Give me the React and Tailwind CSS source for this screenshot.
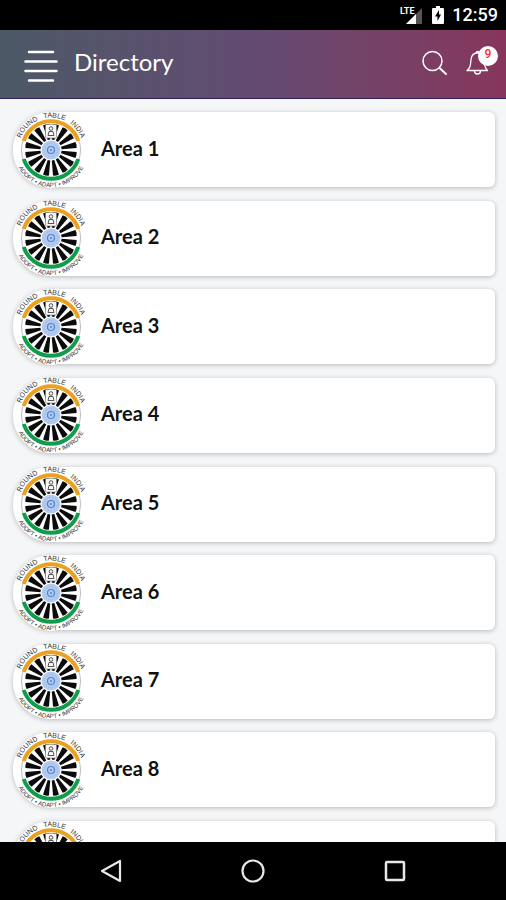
import { useId } from 'react';

const areas = [1, 2, 3, 4, 5, 6, 7, 8, 9];
const spokes = Array.from({ length: 16 }, (_, i) => i * 22.5 + 11.25);

function TableLogo() {
  const id = useId();
  const topArc = `${id}-top`;
  const bottomArc = `${id}-bottom`;

  return (
    <svg className="size-19 shrink-0 overflow-visible" viewBox="-38 -38 76 76" role="img" aria-label="Round Table India">
      <defs>
        <path id={topArc} d="M-31.5 8A32.5 32.5 0 1 1 31.5 8" />
        <path id={bottomArc} d="M-36.5 -6A37 37 0 1 0 36.5 -6" />
      </defs>
      <circle r="38" fill="#fff" />
      <circle r="29.5" fill="#fff" stroke="#b9bcc0" strokeWidth="1" />

      {/* Wheel */}
      {spokes.map((angle) => (
        <path key={angle} d="M-1.3 -10.5L-3 -25.5Q0 -26.5 3 -25.5L1.3 -10.5Z" fill="#0b0b0b" transform={`rotate(${angle})`} />
      ))}
      <path d="M-27.3 -9A28.7 28.7 0 0 1 27.3 -9" fill="none" stroke="#eba01f" strokeWidth="4" />
      <path d="M-27.3 9A28.7 28.7 0 0 0 27.3 9" fill="none" stroke="#0f9d4b" strokeWidth="4" />

      {/* Crest */}
      <rect x="-5.5" y="-25.5" width="11" height="13.5" rx="1" fill="#f8f8f8" stroke="#777" strokeWidth="0.6" />
      <circle cy="-21.5" r="1.8" fill="none" stroke="#444" strokeWidth="0.9" />
      <path d="M-3 -14.5L-2 -18.5H2L3 -14.5Z" fill="none" stroke="#444" strokeWidth="0.9" />

      {/* Hub */}
      <circle r="9.5" fill="#b4caee" />
      <circle r="6.5" fill="none" stroke="#9ab8e6" strokeWidth="1" strokeDasharray="1 1" />
      <circle r="3.5" fill="none" stroke="#4f84d0" strokeWidth="1.2" />
      <circle r="1" fill="#4f84d0" />

      <g className="font-['Liberation_Sans',sans-serif]" fill="#333" fontSize="7" textAnchor="middle">
        <text>
          <textPath href={`#${topArc}`} startOffset="50%">ROUND&#160;&#160;&#160;TABLE&#160;&#160;&#160;INDIA</textPath>
        </text>
        <text fontSize="6">
          <textPath href={`#${bottomArc}`} startOffset="50%">ADOPT&#160;•&#160;ADAPT&#160;•&#160;IMPROVE</textPath>
        </text>
      </g>
    </svg>
  );
}

function StatusBar() {
  return (
    <div className="flex h-[30px] shrink-0 items-center justify-end bg-black pr-2 text-white">
      <svg className="mr-2 h-5 w-6 overflow-visible" viewBox="0 0 24 20" aria-hidden="true">
        <path d="M22 3V19H6Z" fill="#555" />
        <path d="M16 9V19H6Z" fill="#fff" />
        <text x="0" y="9" fill="#fff" fontSize="9" className="font-['Roboto',sans-serif] font-bold">LTE</text>
      </svg>
      <svg className="mr-2 h-5 w-3" viewBox="0 0 12 20" aria-hidden="true">
        <path d="M4 1H8V3H11Q12 3 12 4V18Q12 19 11 19H1Q0 19 0 18V4Q0 3 1 3H4Z" fill="#fff" />
        <path d="M7 5L3 11.5H5.5V16L9 9.5H7Z" fill="#000" />
      </svg>
      <span className="font-['Roboto',sans-serif] text-lg font-medium">12:59</span>
    </div>
  );
}

function Header() {
  return (
    <header className="flex h-[69px] shrink-0 items-center border-b border-[#30205a] bg-linear-to-r from-[#4b5966] via-[#634b72] to-[#87355c] pr-2 pl-6 text-white">
      <button type="button" aria-label="Menu" className="pt-1">
        <svg className="h-9 w-[34px]" viewBox="0 0 34 36" fill="none" stroke="currentColor" strokeWidth="2.5" strokeLinecap="round">
          <path d="M5 4H29M1.5 13.5H32.5M1.5 23H32.5M5 32.5H29" />
        </svg>
      </button>
      <h1 className="mb-1 ml-4 flex-1 font-['Lato',sans-serif] text-2xl">Directory</h1>
      <button type="button" aria-label="Search" className="mr-4 pb-1">
        <svg className="size-7" viewBox="0 0 28 28" fill="none" stroke="currentColor" strokeLinecap="round">
          <circle cx="10.5" cy="13" r="9.5" strokeWidth="1.5" />
          <path d="M17.5 20L24 26" strokeWidth="2" />
        </svg>
      </button>
      <button type="button" aria-label="Notifications" className="relative w-8">
        <svg className="h-7 w-6" viewBox="0 0 24 28" fill="none" stroke="currentColor" strokeWidth="1.3" strokeLinecap="round" strokeLinejoin="round">
          <path d="M1 20.5H21.5C18.5 18 18.5 15 18 9.5C17.5 5 14.5 3 11.5 3S5.5 5 5 9.5C4.5 15 4.5 18 1 20.5Z" />
          <path d="M8.5 21C8.5 25 14.5 25 14.5 21M10 3C10 1 13 1 13 3" />
        </svg>
        <span className="absolute -top-1 right-0 flex size-5 items-center justify-center rounded-full bg-white pb-1 font-['Roboto',sans-serif] text-xs font-medium text-red-500">9</span>
      </button>
    </header>
  );
}

function NavBar() {
  return (
    <nav className="flex h-[58px] shrink-0 items-center justify-center gap-[118px] bg-black text-[#e8e8e8]">
      <button type="button" aria-label="Back">
        <svg className="size-6" viewBox="0 0 24 24" fill="none" stroke="currentColor" strokeWidth="2.2" strokeLinejoin="round">
          <path d="M21 2V22L3 12Z" />
        </svg>
      </button>
      <button type="button" aria-label="Home">
        <svg className="size-6" viewBox="0 0 24 24" fill="none" stroke="currentColor" strokeWidth="2.2">
          <circle cx="12" cy="12" r="10.5" />
        </svg>
      </button>
      <button type="button" aria-label="Recent apps">
        <svg className="size-6" viewBox="0 0 24 24" fill="none" stroke="currentColor" strokeWidth="2.5">
          <rect x="3" y="3" width="18" height="18" rx="1" />
        </svg>
      </button>
    </nav>
  );
}

export default function App() {
  return (
    <div className="flex h-screen flex-col overflow-hidden bg-[#f4f6f8]">
      <StatusBar />
      <Header />
      <main className="min-h-0 flex-1 overflow-hidden">
        <ul className="flex min-h-[810px] flex-col justify-between py-[13px] pr-[11px] pl-[13px]">
          {areas.map((area) => (
            <li key={area}>
              <a href={`#area-${area}`} className="flex h-[75px] items-center rounded-l-[38px] rounded-r-md bg-white shadow-[0_1px_5px_rgba(0,0,0,0.25)]">
                <TableLogo />
                <span className="mb-1 ml-3 font-['Lato',sans-serif] text-[20px] leading-7 font-bold text-[#111]">Area {area}</span>
              </a>
            </li>
          ))}
        </ul>
      </main>
      <NavBar />
    </div>
  );
}
